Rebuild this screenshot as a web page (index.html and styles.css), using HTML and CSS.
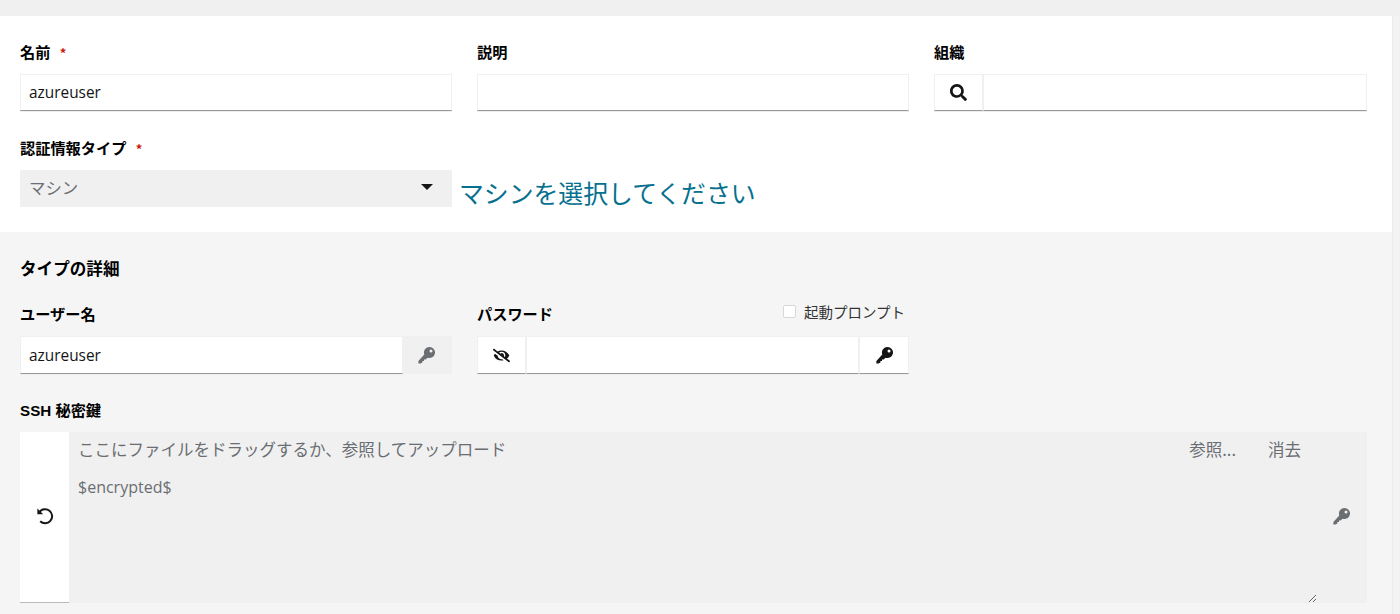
FILE: index.html
```html
<!DOCTYPE html>
<html lang="ja">
<head>
    <meta charset="UTF-8">
    <title>認証情報の編集</title>
    <link rel="stylesheet" href="styles.css">
</head>
<body>
    <div class="page">
        <div class="form-main">
            <div class="form-row">
                <div class="field">
                    <label class="field-label">名前 <span class="required">*</span></label>
                    <input class="text-input" type="text" value="azureuser">
                </div>
                <div class="field">
                    <label class="field-label">説明</label>
                    <input class="text-input" type="text">
                </div>
                <div class="field">
                    <label class="field-label">組織</label>
                    <div class="input-group">
                        <button class="group-btn" type="button">
                            <svg class="icon" viewBox="0 0 512 512"><path d="M505 442.7L405.3 343c-4.5-4.5-10.6-7-17-7H372c27.6-35.3 44-79.7 44-128C416 93.1 322.9 0 208 0S0 93.1 0 208s93.1 208 208 208c48.3 0 92.7-16.4 128-44v16.3c0 6.4 2.5 12.5 7 17l99.7 99.7c9.4 9.4 24.6 9.4 33.9 0l28.3-28.3c9.4-9.4 9.4-24.6.1-34zM208 336c-70.7 0-128-57.2-128-128 0-70.7 57.2-128 128-128 70.7 0 128 57.2 128 128 0 70.7-57.2 128-128 128z"/></svg>
                        </button>
                        <input class="text-input grouped" type="text">
                    </div>
                </div>
            </div>
            <div class="type-row">
                <div class="field">
                    <label class="field-label">認証情報タイプ <span class="required">*</span></label>
                    <div class="select-box">マシン<span class="caret"></span></div>
                </div>
                <a class="type-link" href="#">マシンを選択してください</a>
            </div>
        </div>

        <div class="form-details">
            <h2 class="details-title">タイプの詳細</h2>
            <div class="form-row">
                <div class="field">
                    <label class="field-label">ユーザー名</label>
                    <div class="input-group">
                        <input class="text-input grouped" type="text" value="azureuser">
                        <span class="group-btn disabled">
                            <svg class="icon" viewBox="0 0 17 17"><use href="#key-icon"/></svg>
                        </span>
                    </div>
                </div>
                <div class="field">
                    <div class="label-row">
                        <label class="field-label">パスワード</label>
                        <label class="prompt"><span class="checkbox"></span>起動プロンプト</label>
                    </div>
                    <div class="input-group">
                        <button class="group-btn" type="button">
                            <svg class="icon eye" viewBox="0 0 640 512"><path d="M320 400c-75.85 0-137.25-58.71-142.9-133.11L72.2 185.82c-13.79 17.3-26.48 35.59-36.72 55.59a32.35 32.35 0 0 0 0 29.19C89.71 376.41 197.07 448 320 448c26.91 0 52.87-4 77.89-10.46L346 397.39a144.13 144.13 0 0 1-26 2.61zm313.82 58.1l-110.55-85.44a331.25 331.25 0 0 0 81.25-102.07 32.35 32.35 0 0 0 0-29.19C550.29 135.59 442.93 64 320 64a308.15 308.15 0 0 0-147.32 37.7L45.46 3.37A16 16 0 0 0 23 6.18L3.37 31.45A16 16 0 0 0 6.18 53.9l588.36 454.73a16 16 0 0 0 22.46-2.81l19.64-25.27a16 16 0 0 0-2.82-22.45zm-183.72-142l-39.3-30.38A94.75 94.75 0 0 0 416 256a94.76 94.76 0 0 0-121.31-92.21A47.65 47.65 0 0 1 304 192a46.64 46.64 0 0 1-1.54 10l-73.61-56.89A142.31 142.31 0 0 1 320 112a143.92 143.92 0 0 1 144 144c0 21.63-5.29 41.79-13.9 60.11z"/></svg>
                        </button>
                        <input class="text-input grouped" type="text">
                        <button class="group-btn wide" type="button">
                            <svg class="icon" viewBox="0 0 17 17"><use href="#key-icon"/></svg>
                        </button>
                    </div>
                </div>
                <div class="field"></div>
            </div>
            <div class="ssh-field">
                <label class="field-label">SSH 秘密鍵</label>
                <div class="ssh-box">
                    <button class="revert-btn" type="button">
                        <svg class="revert-icon" viewBox="0 0 18 18"><path d="M3.4 5.2A7 7 0 1 1 4.2 14.2"/><path class="arrow" d="M1.4 1.4v5.8h5.8z"/></svg>
                    </button>
                    <div class="ssh-content">
                        <div class="upload-row">
                            <span class="upload-hint">ここにファイルをドラッグするか、参照してアップロード</span>
                            <span class="upload-action browse">参照...</span>
                            <span class="upload-action">消去</span>
                        </div>
                        <div class="ssh-body">
                            <textarea class="ssh-text" disabled>$encrypted$</textarea>
                            <span class="ssh-key">
                                <svg class="icon" viewBox="0 0 17 17"><use href="#key-icon"/></svg>
                            </span>
                        </div>
                    </div>
                </div>
            </div>
        </div>
    </div>

    <svg class="icon-defs" width="0" height="0">
        <symbol id="key-icon" viewBox="0 0 17 17">
            <path fill-rule="evenodd" d="M11.5 0a5.5 5.5 0 1 1-1.9 10.66L7.6 12.6H6V14H4.4v1.4L2.6 16.6H.4V14L6.3 7.4A5.5 5.5 0 0 1 11.5 0zM13 2.5a1.5 1.5 0 1 0 0 3 1.5 1.5 0 0 0 0-3z"/>
        </symbol>
    </svg>
</body>
</html>
```

FILE: styles.css
```css
* {
    margin: 0;
    padding: 0;
    box-sizing: border-box;
}
html, body {
    height: 100%;
    overflow: hidden;
}
body {
    font-family: "Open Sans", "Noto Sans CJK JP", sans-serif;
    background: #f3f3f3;
    color: #151515;
}
.page {
    border-top: 16px solid #f0f0f0;
    padding-right: 8px;
}
.form-main {
    background: #fff;
    padding: 26px 25px 25px 20px;
    box-shadow: 1px 0 0 #ebebeb;
}
.form-details {
    background: #f5f5f5;
    padding: 26px 25px 11px 20px;
    box-shadow: 1px 0 0 #ebebeb;
}
.form-row {
    display: grid;
    grid-template-columns: 432px 432px 1fr;
    column-gap: 25px;
}
.type-row {
    display: flex;
    align-items: flex-end;
    margin-top: 27px;
}
.type-row .field {
    width: 432px;
}
.field-label {
    display: block;
    height: 21px;
    font-family: "Noto Sans CJK JP", sans-serif;
    font-size: 15.2px;
    font-weight: 700;
    line-height: 19px;
    margin-bottom: 11px;
    color: #000;
}
.required {
    color: #c9190b;
    font-size: 13px;
    margin-left: 6px;
}
.text-input {
    display: block;
    width: 100%;
    height: 37px;
    padding: 0 8px;
    font-family: "Open Sans", sans-serif;
    font-size: 15.4px;
    color: #151515;
    background: #fff;
    border: 1px solid #f0f0f0;
    border-bottom-color: #999;
    box-shadow: 0 1px 0 #eeeeee;
    outline: none;
}
.input-group {
    display: flex;
}
.text-input.grouped {
    flex: 1;
    min-width: 0;
}
.group-btn {
    display: flex;
    align-items: center;
    justify-content: center;
    flex: none;
    width: 49px;
    background: #fff;
    border: 1px solid #f0f0f0;
    border-bottom-color: #999;
    box-shadow: 0 1px 0 #eeeeee;
    color: #151515;
}
.group-btn.wide {
    width: 50px;
}
.group-btn.disabled {
    padding-right: 2px;
    background: #f0f0f0;
    border-color: #f0f0f0;
    box-shadow: none;
    color: #6a6e73;
}
.form-details .text-input,
.form-details .group-btn {
    height: 38px;
}
.icon {
    width: 17px;
    height: 17px;
    fill: currentColor;
}
.icon.eye {
    width: 17px;
    height: 15px;
}
.icon-defs {
    position: absolute;
}
.select-box {
    display: flex;
    align-items: center;
    justify-content: space-between;
    height: 37px;
    padding: 0 19px 4px 9px;
    background: #f0f0f0;
    color: #6a6e73;
    font-family: "Noto Sans CJK JP", sans-serif;
    font-size: 16.4px;
}
.caret {
    width: 0;
    height: 0;
    border-left: 6px solid transparent;
    border-right: 6px solid transparent;
    border-top: 6px solid #151515;
}
.type-link {
    margin-left: 7px;
    font-family: "Noto Sans CJK JP", sans-serif;
    font-size: 24.85px;
    line-height: 30px;
    color: #06708f;
    text-decoration: none;
}
.details-title {
    height: 21px;
    font-family: "Noto Sans CJK JP", sans-serif;
    font-size: 16.6px;
    font-weight: 700;
    line-height: 21px;
    margin-bottom: 25px;
    color: #000;
}
.label-row {
    display: flex;
    justify-content: space-between;
    height: 32px;
}
.prompt {
    display: flex;
    align-items: center;
    height: 15px;
    margin-right: 4px;
    font-family: "Noto Sans CJK JP", sans-serif;
    font-size: 14.5px;
    color: #333;
}
.checkbox {
    width: 13px;
    height: 13px;
    margin-right: 8px;
    background: #fff;
    border: 1px solid #d8d8d8;
    border-radius: 2px;
}
.ssh-field {
    margin-top: 27px;
}
.ssh-field .field-label {
    font-family: "Liberation Sans", "Noto Sans CJK JP", sans-serif;
    margin-bottom: 10px;
}
.ssh-box {
    display: flex;
    height: 171px;
}
.revert-btn {
    display: flex;
    align-items: center;
    justify-content: center;
    flex: none;
    width: 49px;
    padding-bottom: 3px;
    background: #fff;
    border: none;
    border-bottom: 1px solid #b8bbbe;
}
.revert-icon {
    width: 18px;
    height: 18px;
    fill: none;
    stroke: #151515;
    stroke-width: 2;
}
.revert-icon .arrow {
    fill: #151515;
    stroke: none;
}
.ssh-content {
    flex: 1;
    min-width: 0;
    background: #f0f0f0;
    color: #6a6e73;
}
.upload-row {
    display: flex;
    align-items: center;
    height: 34px;
    padding: 0 66px 0 9px;
    font-family: "Noto Sans CJK JP", sans-serif;
    font-size: 16.5px;
}
.upload-hint {
    flex: 1;
}
.upload-action.browse {
    margin-right: 32px;
}
.ssh-body {
    display: flex;
    height: 137px;
}
.ssh-text {
    flex: 1;
    min-width: 0;
    padding: 10px 9px;
    background: #f0f0f0;
    border: none;
    color: #6a6e73;
    font-family: "Open Sans", sans-serif;
    font-size: 16px;
    line-height: 22px;
    resize: both;
    outline: none;
}
.ssh-key {
    display: flex;
    align-items: center;
    justify-content: center;
    flex: none;
    width: 50px;
    padding-bottom: 37px;
    padding-right: 2px;
    color: #6a6e73;
}
```
